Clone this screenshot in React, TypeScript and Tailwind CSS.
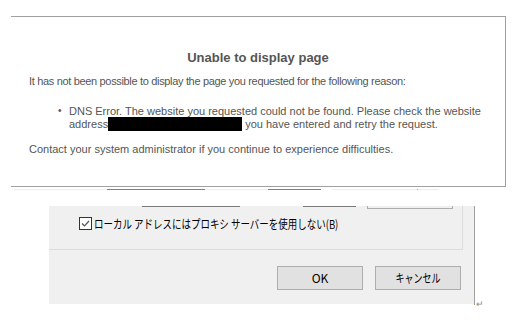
import React from "react";

const sans = { fontFamily: '"Liberation Sans", Arial, sans-serif' };

const ErrorBox: React.FC = () => {
  return (
    <div
      className="ml-[11px] mt-[16px] w-[495px] h-[171px] border-t border-r border-b border-[#a0a0a0] pt-[33px] text-[#555555] font-['Liberation_Sans',Arial,sans-serif]"
    >
      <h1 className="text-center text-[13px] leading-[15px] font-bold text-[#555555]">
        Unable to display page
      </h1>
      <p className="mt-[10px] pl-[18px] text-[11px] leading-[13px] tracking-[-0.33px]">
        It has not been possible to display the page you requested for the following reason:
      </p>
      <div className="mt-[17px] flex text-[11px] leading-[12px]">
        <span className="w-[58px] pl-[47px] text-[10px]">•</span>
        <p className="w-[425px]">
          DNS Error. The website you requested could not be found. Please check the website
          address<span className="inline-block w-[134px] h-[14px] bg-black align-[-3px]" /> you
          have entered and retry the request.
        </p>
      </div>
      <p className="mt-[12px] pl-[18px] text-[11px] leading-[13px]">
        Contact your system administrator if you continue to experience difficulties.
      </p>
    </div>
  );
};

// leftovers of the dialog behind the error page
const StrayLine: React.FC = () => (
  <div className="ml-[14px] mt-[2px] flex h-px">
    <div className="w-[93px] bg-[#ededed]" />
    <div className="w-[98px] bg-[#7f7f7f]" />
    <div className="w-[63px] bg-[#ededed]" />
    <div className="w-[53px] bg-[#7f7f7f]" />
    <div className="w-[11px]" />
    <div className="w-[85px] bg-[#ededed]" />
    <div className="w-px bg-[#b0b0b0]" />
    <div className="w-[21px] bg-[#ededed]" />
  </div>
);

const CheckBox: React.FC = () => (
  <span className="w-[13px] h-[13px] border border-[#333333] bg-white flex items-center justify-center">
    <svg width="11" height="11" viewBox="0 0 11 11">
      <path d="M2 5.5 L4.5 8 L9 3" fill="none" stroke="#555555" strokeWidth="1.2" />
    </svg>
  </span>
);

const Dialog: React.FC = () => {
  const jp = '"Noto Sans CJK JP", "Noto Sans", sans-serif';
  return (
    <div className="ml-[49px] mt-[16px] flex">
      <div className="w-[425px] h-[98px] bg-[#f0f0f0] flex flex-col">
        <div className="w-[414px] h-[44px] border-r border-b border-[#dcdcdc] flex flex-col">
          <div className="flex h-[3px]">
            <div className="ml-[93px] w-[98px] h-px bg-[#7a7a7a]" />
            <div className="ml-[63px] w-[53px] h-px bg-[#7a7a7a]" />
            <div className="ml-[11px] w-[86px] h-[3px] border-l border-r border-b border-[#adadad]" />
          </div>
          <div className="mt-[8px] ml-[30px] flex items-center gap-[2px]">
            <CheckBox />
            <span
              className="inline-block origin-left scale-x-[0.79] whitespace-nowrap text-[12px] leading-[13px] text-black"
              style={{ fontFamily: jp }}
            >
              ローカル アドレスにはプロキシ サーバーを使用しない(B)
            </span>
          </div>
        </div>
        <div className="mt-[16px] pr-[13px] flex justify-end gap-[12px]">
          <button
            className="w-[86px] h-[24px] bg-[#e1e1e1] border border-[#adadad] text-[12px] text-black flex items-center justify-center"
            style={{ fontFamily: jp }}
          >
            OK
          </button>
          <button
            className="w-[86px] h-[24px] bg-[#e1e1e1] border border-[#adadad] text-[12px] text-black flex items-center justify-center"
            style={{ fontFamily: jp }}
          >
            <span className="inline-block scale-x-[0.75] whitespace-nowrap">キャンセル</span>
          </button>
        </div>
      </div>
      <div className="w-px h-[99px] bg-[#a0a0a0]" />
      <span className="self-end ml-px text-[9px] leading-[9px] text-[#8a8a8a] translate-y-[4px]" style={sans}>
        ↵
      </span>
    </div>
  );
};

export default function App() {
  return (
    <div className="w-[519px] h-[331px] bg-white overflow-hidden">
      <div className="pt-px -mt-px">
        <ErrorBox />
        <StrayLine />
        <Dialog />
      </div>
    </div>
  );
}
